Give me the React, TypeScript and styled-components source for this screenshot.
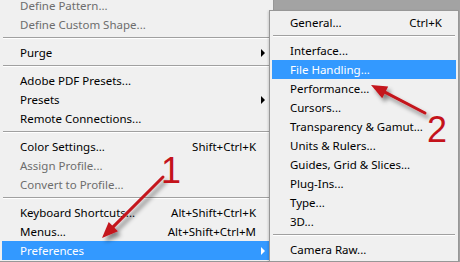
import React from 'react'
import styled, { createGlobalStyle, css } from 'styled-components'

const GlobalStyle = createGlobalStyle`
  html, body {
    margin     : 0;
    padding    : 0;
    overflow   : hidden;
    background : #a3a3a3;
  }
`

const Stage = styled.div`
  position    : relative;
  width       : 460px;
  height      : 262px;
  overflow    : hidden;
  display     : flex;
  align-items : flex-start;
  font-family : "Noto Sans", "Open Sans", sans-serif;
  font-size   : 11.5px;
  color       : #000;
`

const MainMenu = styled.div`
  flex-shrink   : 0;
  width         : 269px;
  margin-top    : -4px;
  padding       : 0 2px 1px 2px;
  background    : #f0f0f0;
  border-right  : 1px solid #979797;
  border-bottom : 1px solid #979797;
`

const SubMenu = styled.div`
  position      : relative;
  flex-shrink   : 0;
  width         : 184px;
  margin-top    : 10px;
  margin-left   : -5px;
  padding       : 2px;
  background    : #f0f0f0;
  border        : 1px solid #979797;
  box-shadow    : -1px 1px 2px rgba(0, 0, 0, 0.15);
`

const Item = styled.div<{ $disabled?: boolean; $active?: boolean }>`
  display     : flex;
  align-items : center;
  height      : 19px;
  padding     : 0 0 0 18px;
  white-space : nowrap;
  color       : ${ (props) => (props.$disabled ? '#6d6d6d' : '#000') };

  ${ (props) => props.$active && css`
    background : #3399ff;
    color      : #fff;
  ` }
`

const Label = styled.span`
  flex : 1;
`

const Shortcut = styled.span`
  margin-left : 12px;
`

const ArrowCell = styled.span<{ $width: number }>`
  display     : flex;
  align-items : center;
  width       : ${ (props) => props.$width }px;
  height      : 100%;
`

const Triangle = styled.span`
  width        : 0;
  height       : 0;
  margin-left  : 5px;
  border-top    : 4px solid transparent;
  border-bottom : 4px solid transparent;
  border-left   : 4px solid currentColor;
`

const Separator = styled.div`
  height        : 9px;
  display       : flex;
  align-items   : flex-start;
  padding-top   : 3px;
  box-sizing    : border-box;

  &::after {
    content       : '';
    flex          : 1;
    margin        : 0 1px;
    border-top    : 1px solid #a0a0a0;
    border-bottom : 1px solid #ffffff;
  }
`

const Overlay = styled.svg`
  position       : absolute;
  left           : 0;
  top            : 0;
  width          : 460px;
  height         : 262px;
  pointer-events : none;
`

const Numeral = styled.text`
  font-family : "Liberation Sans", Arial, sans-serif;
  font-size   : 36px;
  fill        : #c4131b;
`

type Entry =
  | { sep: true }
  | { label: string; shortcut?: string; disabled?: boolean; active?: boolean; sub?: boolean; sep?: false }

const mainItems: Entry[] = [
  { label: 'Define Pattern...', disabled: true },
  { label: 'Define Custom Shape...', disabled: true },
  { sep: true },
  { label: 'Purge', sub: true },
  { sep: true },
  { label: 'Adobe PDF Presets...' },
  { label: 'Presets', sub: true },
  { label: 'Remote Connections...' },
  { sep: true },
  { label: 'Color Settings...', shortcut: 'Shift+Ctrl+K' },
  { label: 'Assign Profile...', disabled: true },
  { label: 'Convert to Profile...', disabled: true },
  { sep: true },
  { label: 'Keyboard Shortcuts...', shortcut: 'Alt+Shift+Ctrl+K' },
  { label: 'Menus...', shortcut: 'Alt+Shift+Ctrl+M' },
  { label: 'Preferences', sub: true, active: true },
]

const subItems: Entry[] = [
  { label: 'General...', shortcut: 'Ctrl+K' },
  { sep: true },
  { label: 'Interface...' },
  { label: 'File Handling...', active: true },
  { label: 'Performance...' },
  { label: 'Cursors...' },
  { label: 'Transparency & Gamut...' },
  { label: 'Units & Rulers...' },
  { label: 'Guides, Grid & Slices...' },
  { label: 'Plug-Ins...' },
  { label: 'Type...' },
  { label: '3D...' },
  { sep: true },
  { label: 'Camera Raw...' },
]

const MenuList = ({ items, arrowWidth }: { items: Entry[]; arrowWidth: number }) => (
  <>
    { items.map((entry, i) =>
      entry.sep ? (
        <Separator key={ i } />
      ) : (
        <Item key={ i } $disabled={ entry.disabled } $active={ entry.active }>
          <Label>{ entry.label }</Label>
          { entry.shortcut && <Shortcut>{ entry.shortcut }</Shortcut> }
          <ArrowCell $width={ arrowWidth }>{ entry.sub && <Triangle /> }</ArrowCell>
        </Item>
      )
    ) }
  </>
)

// arrow body + head, computed from tail and tip
const arrowPoints = (tail: [number, number], tip: [number, number], len: number, half: number) => {
  const dx = tip[0] - tail[0]
  const dy = tip[1] - tail[1]
  const d = Math.hypot(dx, dy)
  const ux = dx / d
  const uy = dy / d
  const bx = tip[0] - ux * len
  const by = tip[1] - uy * len
  return {
    line : { x1: tail[0], y1: tail[1], x2: bx + ux * 2, y2: by + uy * 2 },
    head : `${ tip[0] },${ tip[1] } ${ bx - uy * half },${ by + ux * half } ${ bx + uy * half },${ by - ux * half }`,
  }
}

const RedArrow = ({ tail, tip }: { tail: [number, number]; tip: [number, number] }) => {
  const a = arrowPoints(tail, tip, 16, 6.5)
  return (
    <g filter="url(#shadow)">
      <line { ...a.line } stroke="#c4131b" strokeWidth={ 3 } strokeLinecap="round" />
      <polygon points={ a.head } fill="#c4131b" />
    </g>
  )
}

export default function App() {
  return (
    <>
      <GlobalStyle />
      <Stage>
        <MainMenu>
          <MenuList items={ mainItems } arrowWidth={ 15 } />
        </MainMenu>
        <SubMenu>
          <MenuList items={ subItems } arrowWidth={ 14 } />
        </SubMenu>
        <Overlay viewBox="0 0 460 262">
          <defs>
            <filter id="shadow" x="-30%" y="-30%" width="160%" height="160%">
              <feDropShadow dx="3" dy="4" stdDeviation="2.2" floodColor="#000" floodOpacity="0.45" />
            </filter>
          </defs>
          <RedArrow tail={ [163, 177] } tip={ [102, 238] } />
          <RedArrow tail={ [425, 113] } tip={ [371, 85] } />
          <Numeral x={ 161 } y={ 183 }>1</Numeral>
          <Numeral x={ 427 } y={ 142 }>2</Numeral>
        </Overlay>
      </Stage>
    </>
  )
}
